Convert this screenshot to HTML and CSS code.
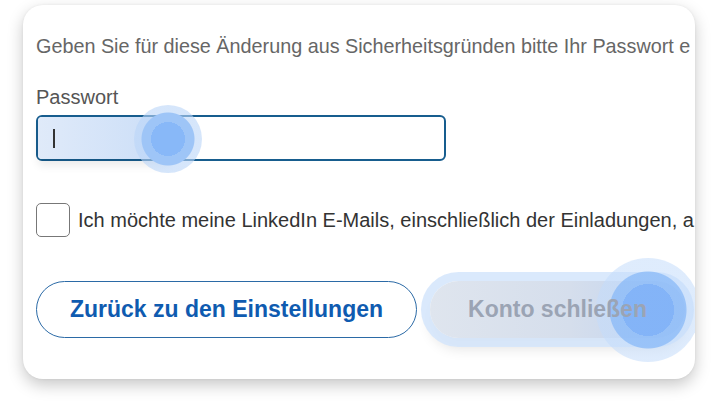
FILE: index.html
```html
<!DOCTYPE html>
<html lang="de">
<head>
<meta charset="utf-8">
<link rel="stylesheet" href="styles.css">
</head>
<body>
<div class="card">
  <p class="intro">Geben Sie für diese Änderung aus Sicherheitsgründen bitte Ihr Passwort e</p>
  <label class="label">Passwort</label>
  <div class="input">
    <span class="caret"></span>
    <span class="trail"></span>
    <span class="tap tap-input"></span>
  </div>
  <div class="check-row">
    <span class="checkbox"></span>
    <span class="check-text">Ich möchte meine LinkedIn E-Mails, einschließlich der Einladungen, a</span>
  </div>
  <div class="buttons">
    <button class="btn btn-outline">Zurück zu den Einstellungen</button>
    <button class="btn btn-disabled"><span class="tap tap-btn"></span><span class="btn-label">Konto schließen</span></button>
  </div>
</div>
</body>
</html>
```
FILE: styles.css
```css
* { box-sizing: border-box; }
html, body { margin: 0; padding: 0; background: #fff; }
body {
  width: 718px; height: 404px; overflow: hidden;
  font-family: "Liberation Sans", Arial, sans-serif;
}
.card {
  margin: 5px 0 0 23px;
  width: 672px;
  height: 374px;
  border-radius: 20px;
  background: #fff;
  box-shadow: 0 6px 16px rgba(0,0,0,0.22), 0 0 3px rgba(0,0,0,0.06);
  overflow: hidden;
  position: relative;
  padding: 31px 0 0 13px;
}
.intro {
  margin: 0;
  font-size: 19.8px;
  color: #666;
  white-space: nowrap;
  line-height: 20px;
}
.label {
  display: block;
  margin-top: 31px;
  font-size: 20px;
  color: #555;
  line-height: 20px;
}
.input {
  position: relative;
  margin-top: 8px;
  width: 410px;
  height: 46px;
  border: 2px solid #175d8e;
  border-radius: 6px;
  background: #fff;
}
.caret {
  position: absolute;
  left: 15px; top: 12px;
  width: 1.5px; height: 19px;
  background: #333;
  z-index: 3;
}
.trail {
  position: absolute;
  left: 0; top: 0;
  width: 132px; height: 42px;
  border-radius: 4px 0 0 4px;
  background: linear-gradient(90deg, rgba(222,233,249,0.95), rgba(198,219,247,0.92));
  box-shadow: 0 7px 8px rgba(0,0,0,0.08);
  z-index: 1;
}
.tap {
  position: absolute;
  border-radius: 50%;
  z-index: 2;
}
.tap-input {
  left: 96px; top: -12px;
  width: 68px; height: 68px;
  background: radial-gradient(circle, #88b8f8 0 17px, #9ec5f7 17px 26px, rgba(186,213,248,0.6) 27px 34px);
}
.check-row {
  display: flex;
  align-items: center;
  margin-top: 42px;
}
.checkbox {
  width: 34px; height: 34px;
  border: 1.5px solid #777;
  border-radius: 5px;
  flex: none;
}
.check-text {
  margin-left: 8px;
  font-size: 20px;
  color: #333;
  white-space: nowrap;
}
.buttons {
  display: flex;
  align-items: center;
  gap: 13px;
  margin-top: 44px;
}
.btn {
  font-family: "Liberation Sans", Arial, sans-serif;
  font-weight: bold;
  font-size: 23px;
  border-radius: 30px;
  height: 57px;
  padding: 0;
}
.btn-outline {
  width: 381px;
  background: #fff;
  color: #0f5bb0;
  border: 1.5px solid #2b6aa6;
}
.btn-disabled {
  position: relative;
  width: 255px;
  border: none;
  color: #9ba4b4;
  background: linear-gradient(90deg, #dfe5ee 0%, #d5deec 55%, #bfd3f1 100%);
  box-shadow: 0 0 0 9px rgba(212,229,252,0.85), 0 10px 14px rgba(0,0,0,0.12);
  z-index: 1;
}
.btn-label {
  position: relative;
  z-index: 3;
}
.tap-btn {
  left: 166px; top: -23px;
  width: 104px; height: 104px;
  background: radial-gradient(circle, rgba(128,178,248,0.95) 0 26px, rgba(145,190,248,0.88) 26px 38px, rgba(196,220,251,0.55) 39px 52px);
}
```
